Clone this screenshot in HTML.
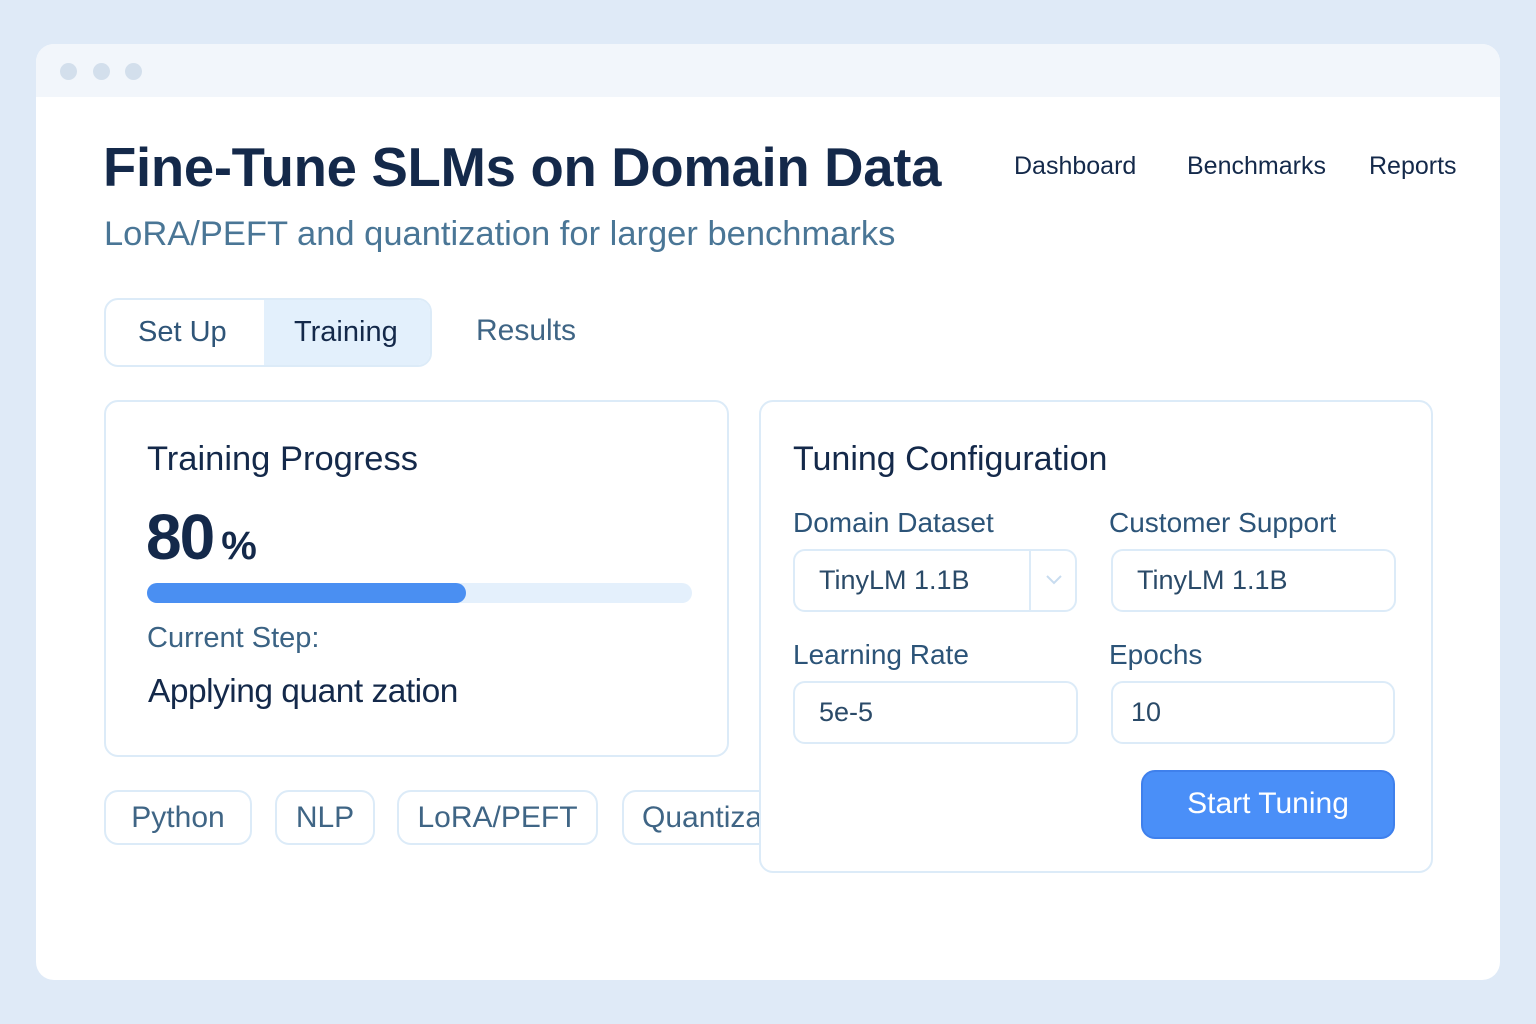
<!DOCTYPE html>
<html><head><meta charset="utf-8"><style>
*{margin:0;padding:0;box-sizing:border-box}
body{width:1536px;height:1024px;background:#dfeaf7;font-family:"Liberation Sans",sans-serif;position:relative;overflow:hidden}
.a{position:absolute;white-space:nowrap}
.win{position:absolute;left:36px;top:44px;width:1464px;height:936px;background:#fff;border-radius:18px;overflow:hidden}
.bar{position:absolute;left:0;top:0;width:100%;height:53px;background:#f2f6fb}
.dot{position:absolute;top:19px;width:17px;height:17px;border-radius:50%;background:#d3dfec}
.card{position:absolute;background:#fff;border:2px solid #dcebf8;border-radius:14px}
.inp{position:absolute;border:2px solid #dcebf8;border-radius:12px;background:#fff;font-size:27px;color:#2a4a68;padding-left:24px;line-height:58px}
.chip{position:absolute;top:790px;height:55px;border:2px solid #dcebf8;border-radius:14px;font-size:30px;color:#3f6585;line-height:51px;text-align:center;background:#fff}
.lbl{font-size:28px;color:#2c5478}
</style></head><body>
<div class="win">
<div class="bar"></div>
<div class="dot" style="left:24px"></div><div class="dot" style="left:57px"></div><div class="dot" style="left:89px"></div>
</div>
<div class="a" style="left:103px;top:136px;font-size:54.5px;font-weight:bold;color:#14294a;letter-spacing:-0.3px">Fine-Tune SLMs on Domain Data</div>
<div class="a" style="left:1014px;top:152px;font-size:25px;color:#14294a">Dashboard</div>
<div class="a" style="left:1187px;top:152px;font-size:25px;color:#14294a">Benchmarks</div>
<div class="a" style="left:1369px;top:152px;font-size:25px;color:#14294a">Reports</div>
<div class="a" style="left:104px;top:215px;font-size:34.5px;color:#4a7696">LoRA/PEFT and quantization for larger benchmarks</div>
<div class="a" style="left:104px;top:298px;width:328px;height:69px;border:2px solid #dcebf8;border-radius:14px;overflow:hidden;background:#fff">
<div class="a" style="left:158px;top:0;width:170px;height:69px;background:#e3f0fc"></div>
<div class="a" style="left:32px;top:16px;font-size:29px;color:#2f5578">Set Up</div>
<div class="a" style="left:188px;top:16px;font-size:29px;color:#14294a">Training</div>
</div>
<div class="a" style="left:476px;top:314px;font-size:30px;color:#3f6585">Results</div>

<div class="chip" style="left:104px;width:148px">Python</div>
<div class="chip" style="left:275px;width:100px">NLP</div>
<div class="chip" style="left:397px;width:201px">LoRA/PEFT</div>
<div class="chip" style="left:622px;width:200px;text-align:left;padding-left:18px">Quantization</div>

<div class="card" style="left:104px;top:400px;width:625px;height:357px">
<div class="a" style="left:41px;top:38px;font-size:34.5px;color:#14294a">Training Progress</div>
<div class="a" style="left:40px;top:98px;font-size:64px;font-weight:bold;color:#14294a;letter-spacing:-2px">80<span style="font-size:40px;margin-left:8px">%</span></div>
<div class="a" style="left:41px;top:181px;width:545px;height:20px;border-radius:10px;background:#e4f0fc"></div>
<div class="a" style="left:41px;top:181px;width:319px;height:20px;border-radius:10px;background:#4a8ff2"></div>
<div class="a" style="left:41px;top:220px;font-size:29px;color:#3b6384">Current Step:</div>
<div class="a" style="left:42px;top:271px;font-size:33.5px;color:#14294a;letter-spacing:-0.5px">Applying quant zation</div>
</div>

<div class="card" style="left:759px;top:400px;width:674px;height:473px">
<div class="a" style="left:32px;top:38px;font-size:34px;color:#14294a">Tuning Configuration</div>
<div class="a lbl" style="left:32px;top:105px">Domain Dataset</div>
<div class="a lbl" style="left:348px;top:105px">Customer Support</div>
<div class="inp" style="left:32px;top:147px;width:284px;height:63px">TinyLM 1.1B
<div class="a" style="left:234px;top:0;width:2px;height:59px;background:#dcebf8"></div>
<svg class="a" style="left:250px;top:22px" width="18" height="14"><path d="M2 3 L9 10 L16 3" fill="none" stroke="#c8dcef" stroke-width="2"/></svg>
</div>
<div class="inp" style="left:350px;top:147px;width:285px;height:63px">TinyLM 1.1B</div>
<div class="a lbl" style="left:32px;top:237px">Learning Rate</div>
<div class="a lbl" style="left:348px;top:237px">Epochs</div>
<div class="inp" style="left:32px;top:279px;width:285px;height:63px">5e-5</div>
<div class="inp" style="left:350px;top:279px;width:284px;height:63px;padding-left:18px">10</div>
<div class="a" style="left:380px;top:368px;width:254px;height:69px;border-radius:14px;background:#4a8ff8;border:2px solid #3f80ec;color:#fff;font-size:30px;text-align:center;line-height:63px">Start Tuning</div>
</div>
</body></html>
